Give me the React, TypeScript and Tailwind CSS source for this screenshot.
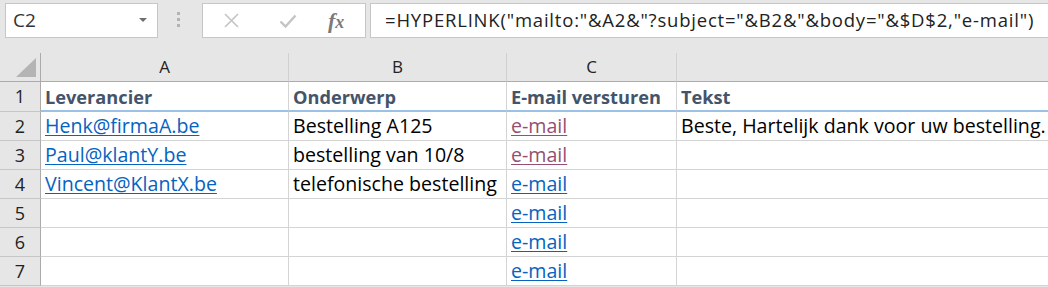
import React from "react";

const cellFont = { fontFamily: "'Open Sans', sans-serif" };

type Row = { n: number; a?: string; b?: string; c?: "visited" | "link"; d?: string };

const rows: Row[] = [
  { n: 2, a: "Henk@firmaA.be", b: "Bestelling A125", c: "visited", d: "Beste, Hartelijk dank voor uw bestelling." },
  { n: 3, a: "Paul@klantY.be", b: "bestelling van 10/8", c: "visited" },
  { n: 4, a: "Vincent@KlantX.be", b: "telefonische bestelling", c: "link" },
  { n: 5, c: "link" },
  { n: 6, c: "link" },
  { n: 7, c: "link" },
];

const cols = "grid grid-cols-[41px_248px_218px_170px_1fr]";

function Link({ text, visited }: { text: string; visited?: boolean }) {
  return (
    <span
      className={`underline decoration-1 underline-offset-[2px] ${visited ? "text-[#954f72]" : "text-[#0563c1]"}`}
    >
      {text}
    </span>
  );
}

export default function App() {
  return (
    <div
      className="w-[1048px] h-[287px] bg-[#e6e6e6] overflow-hidden"
      style={{ fontFamily: "'Open Sans', sans-serif" }}
    >
      {/* formula bar */}
      <div className="h-[53px] flex items-start pt-[3px]">
        <div className="ml-[5px] w-[153px] h-[35px] bg-white border border-[#c6c6c6] flex items-center justify-between pl-[7px] pr-[10px]">
          <span className="text-[19px] text-[#333] leading-none">C2</span>
          <svg width="8" height="5" viewBox="0 0 8 5">
            <path d="M0 0 L8 0 L4 4 Z" fill="#6e6e6e" />
          </svg>
        </div>
        <div className="ml-[19px] mt-[9px] flex flex-col gap-[3px]">
          <div className="w-[3px] h-[3px] bg-[#b3b3b3]" />
          <div className="w-[3px] h-[3px] bg-[#b3b3b3]" />
          <div className="w-[3px] h-[3px] bg-[#b3b3b3]" />
        </div>
        <div className="ml-[22px] w-[164px] h-[35px] bg-white border border-[#c6c6c6] flex items-center">
          <svg className="ml-[20px]" width="17" height="17" viewBox="0 0 17 17">
            <path d="M2 2 L15 15 M15 2 L2 15" stroke="#c4c4c4" strokeWidth="1.6" />
          </svg>
          <svg className="ml-[39px]" width="18" height="14" viewBox="0 0 18 14">
            <path d="M1.5 7.5 L6.5 12.5 L16.5 1.5" stroke="#c4c4c4" strokeWidth="2.4" fill="none" />
          </svg>
          <span
            className="ml-[31px] text-[22px] italic font-bold text-[#7a7a7a] leading-none"
            style={{ fontFamily: "'Liberation Serif', serif" }}
          >
            <span>f</span>
            <span className="text-[18px]">x</span>
          </span>
        </div>
        <div className="ml-[4px] flex-1 h-[35px] bg-white border border-[#c6c6c6] border-r-0 flex items-center pl-[14px]">
          <span className="text-[18.5px] text-[#222] leading-none whitespace-nowrap tracking-[0.8px]">
            =HYPERLINK("mailto:"&amp;A2&amp;"?subject="&amp;B2&amp;"&amp;body="&amp;$D$2,"e-mail")
          </span>
        </div>
      </div>

      {/* column header */}
      <div className={`${cols} h-[29px]`}>
        <div className="border-r border-b border-[#ababab] relative">
          <svg className="absolute left-[16px] top-[5px]" width="21" height="20" viewBox="0 0 21 20">
            <path d="M20 0 L20 19 L0 19 Z" fill="#b4b4b4" />
          </svg>
        </div>
        {["A", "B", "C", ""].map((l, i) => (
          <div
            key={i}
            className={`border-b border-b-[#ababab] ${i < 3 ? "border-r border-r-[#d0d0d0]" : ""} flex items-center justify-center text-[17px] text-[#222]`}
          >
            {l}
          </div>
        ))}
      </div>

      {/* row 1 */}
      <div className={`${cols} h-[30px]`} style={cellFont}>
        <div className="border-r border-b border-r-[#ababab] border-b-[#c6c6c6] flex items-center justify-center text-[18px] text-[#222]">
          1
        </div>
        {["Leverancier", "Onderwerp", "E-mail versturen", "Tekst"].map((t, i) => (
          <div
            key={i}
            className={`bg-white border-b-2 border-b-[#9bc2e6] ${i < 3 ? "border-r border-r-[#d4d4d4]" : ""} flex items-end pl-[4px] pb-[1px] text-[18.2px] font-bold text-[#44546a] leading-[24px] whitespace-nowrap`}
          >
            {t}
          </div>
        ))}
      </div>

      {rows.map((r) => (
        <div key={r.n} className={`${cols} h-[29px]`} style={cellFont}>
          <div className="border-r border-b border-r-[#ababab] border-b-[#c6c6c6] flex items-center justify-center text-[18px] text-[#222]">
            {r.n}
          </div>
          <div className="bg-white border-r border-b border-[#d4d4d4] flex items-end pl-[4px] pb-[2px] text-[19.6px] leading-[24px] whitespace-nowrap">
            {r.a && <Link text={r.a} />}
          </div>
          <div className="bg-white border-r border-b border-[#d4d4d4] flex items-end pl-[4px] pb-[2px] text-[19.6px] leading-[24px] text-black whitespace-nowrap">
            {r.b}
          </div>
          <div className="bg-white border-r border-b border-[#d4d4d4] flex items-end pl-[4px] pb-[2px] text-[19.6px] leading-[24px] whitespace-nowrap">
            {r.c && <Link text="e-mail" visited={r.c === "visited"} />}
          </div>
          <div className="bg-white border-b border-[#d4d4d4] flex items-end pl-[4px] pb-[2px] text-[19.6px] leading-[24px] text-black whitespace-nowrap">
            {r.d}
          </div>
        </div>
      ))}
    </div>
  );
}
